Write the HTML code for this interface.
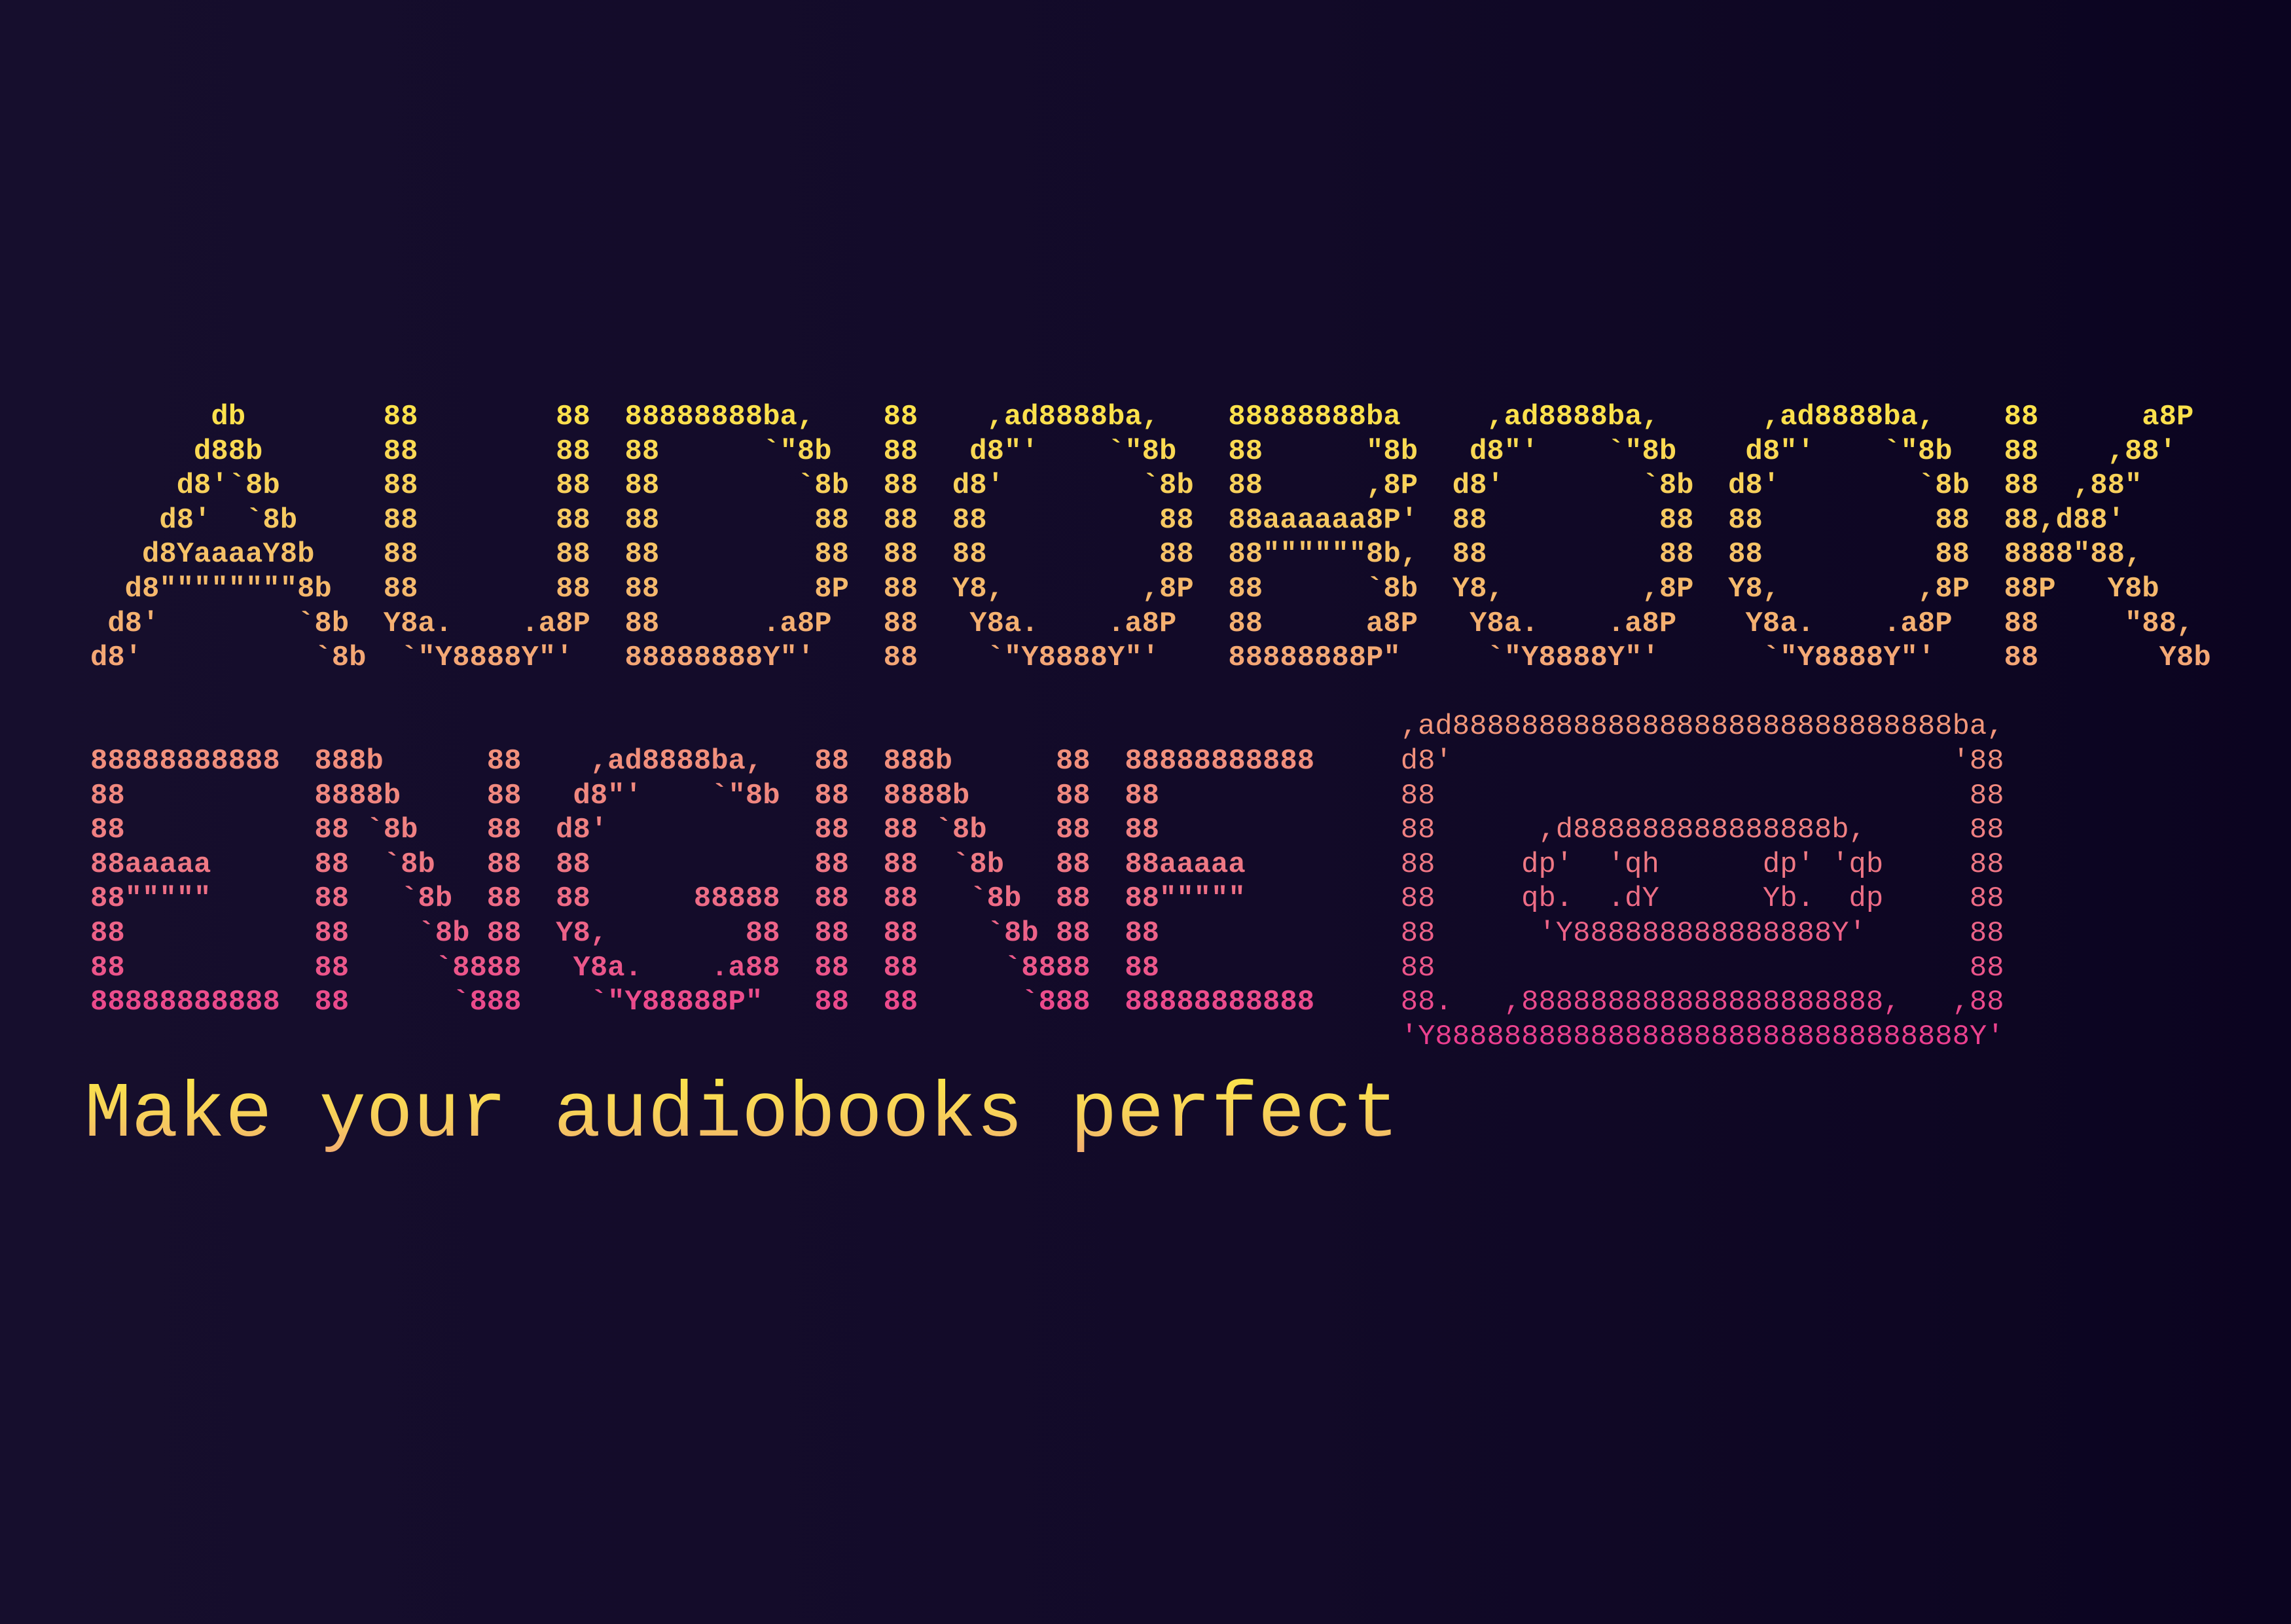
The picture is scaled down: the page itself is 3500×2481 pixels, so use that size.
<!DOCTYPE html>
<html><head><meta charset="utf-8"><style>
html,body{margin:0;padding:0;}
body{width:3500px;height:2481px;overflow:hidden;background:linear-gradient(90deg,#160e2d 0%,#120a28 55%,#0b0420 100%);position:relative;}
pre{position:absolute;left:138px;top:611px;margin:0;font-family:"Liberation Mono",monospace;font-weight:bold;font-size:43.9px;line-height:52.6px;white-space:pre;
background:linear-gradient(180deg,#fde449 0%,#f6c764 20%,#f4a676 40%,#f2967a 50%,#ef7a84 70%,#ea3a8f 100%);-webkit-background-clip:text;background-clip:text;color:transparent;}
pre .n{font-weight:normal;}
.tag{position:absolute;left:129px;top:1644px;margin:0;font-family:"Liberation Mono",monospace;font-size:119.5px;line-height:119.5px;white-space:pre;
background:linear-gradient(180deg,#fbe54a 0%,#f6cd5c 55%,#f2ac72 100%);-webkit-background-clip:text;background-clip:text;color:transparent;}
</style></head><body>
<pre>       db        88        88  88888888ba,    88    ,ad8888ba,    88888888ba     ,ad8888ba,      ,ad8888ba,    88      a8P 
      d88b       88        88  88      `"8b   88   d8"'    `"8b   88      "8b   d8"'    `"8b    d8"'    `"8b   88    ,88'  
     d8'`8b      88        88  88        `8b  88  d8'        `8b  88      ,8P  d8'        `8b  d8'        `8b  88  ,88"    
    d8'  `8b     88        88  88         88  88  88          88  88aaaaaa8P'  88          88  88          88  88,d88'     
   d8YaaaaY8b    88        88  88         88  88  88          88  88""""""8b,  88          88  88          88  8888"88,    
  d8""""""""8b   88        88  88         8P  88  Y8,        ,8P  88      `8b  Y8,        ,8P  Y8,        ,8P  88P   Y8b   
 d8'        `8b  Y8a.    .a8P  88      .a8P   88   Y8a.    .a8P   88      a8P   Y8a.    .a8P    Y8a.    .a8P   88     "88, 
d8'          `8b  `"Y8888Y"'   88888888Y"'    88    `"Y8888Y"'    88888888P"     `"Y8888Y"'      `"Y8888Y"'    88       Y8b

                                                                            <span class="n">,ad88888888888888888888888888888ba,</span>
88888888888  888b      88    ,ad8888ba,   88  888b      88  88888888888     <span class="n">d8'                             '88</span>
88           8888b     88   d8"'    `"8b  88  8888b     88  88              <span class="n">88                               88</span>
88           88 `8b    88  d8'            88  88 `8b    88  88              <span class="n">88      ,d888888888888888b,      88</span>
88aaaaa      88  `8b   88  88             88  88  `8b   88  88aaaaa         <span class="n">88     dp'  'qh      dp' 'qb     88</span>
88"""""      88   `8b  88  88      88888  88  88   `8b  88  88"""""         <span class="n">88     qb.  .dY      Yb.  dp     88</span>
88           88    `8b 88  Y8,        88  88  88    `8b 88  88              <span class="n">88      'Y888888888888888Y'      88</span>
88           88     `8888   Y8a.    .a88  88  88     `8888  88              <span class="n">88                               88</span>
88888888888  88      `888    `"Y88888P"   88  88      `888  88888888888     <span class="n">88.   ,888888888888888888888,   ,88</span>
                                                                            <span class="n">'Y8888888888888888888888888888888Y'</span></pre>
<div class="tag">Make your audiobooks perfect</div>
</body></html>
